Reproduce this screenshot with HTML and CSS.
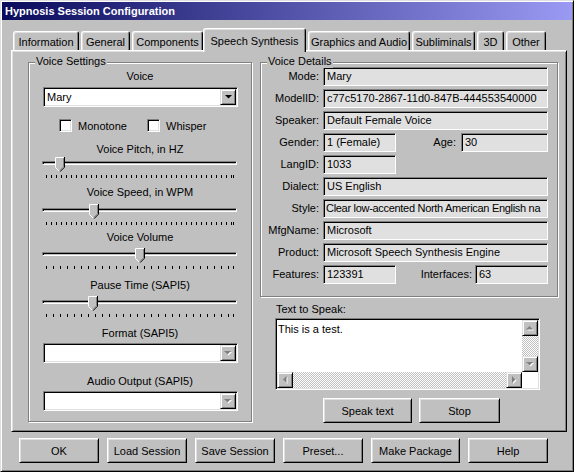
FILE: index.html
```html
<!DOCTYPE html>
<html lang="en">
<head>
  <meta charset="UTF-8" />
  <title>Hypnosis Session Configuration</title>
  <link rel="stylesheet" href="styles.css">
</head>
<body>
  <div class="window">
    <div class="titlebar">Hypnosis Session Configuration</div>

    <div class="tabs">
      <div class="tab">Information</div>
      <div class="tab">General</div>
      <div class="tab">Components</div>
      <div class="tab active">Speech Synthesis</div>
      <div class="tab">Graphics and Audio</div>
      <div class="tab">Subliminals</div>
      <div class="tab">3D</div>
      <div class="tab">Other</div>
    </div>

    <div class="panel">
      <div class="group voice-settings">
        <span class="group-title">Voice Settings</span>

        <div class="caption voice">Voice</div>
        <div class="combo voice">
          <span class="combo-text">Mary</span>
          <span class="drop"><svg width="7" height="4" viewBox="0 0 7 4"><path d="M0 0H7L3.5 3.5Z" fill="#000"/></svg></span>
        </div>

        <div class="checks">
          <label class="check"><span class="box"></span>Monotone</label>
          <label class="check"><span class="box"></span>Whisper</label>
        </div>

        <div class="caption pitch">Voice Pitch, in HZ</div>
        <div class="slider pitch">
          <div class="track"></div>
          <svg class="thumb" style="left: 13px" width="10" height="16" viewBox="0 0 10 16"><path d="M0 0H10V10L5 15L0 10Z" fill="#c0c0c0"/><path d="M0.5 10.5V0.5H9" stroke="#fff" fill="none"/><path d="M0.5 10.5L4.5 14.5" stroke="#fff"/><path d="M9.5 0V10.2L5 14.7" stroke="#000" fill="none"/><path d="M8.5 1V9.8L5 13.3" stroke="#808080" fill="none"/></svg>
          <div class="ticks fine"></div>
        </div>

        <div class="caption speed">Voice Speed, in WPM</div>
        <div class="slider speed">
          <div class="track"></div>
          <svg class="thumb" style="left: 47px" width="10" height="16" viewBox="0 0 10 16"><path d="M0 0H10V10L5 15L0 10Z" fill="#c0c0c0"/><path d="M0.5 10.5V0.5H9" stroke="#fff" fill="none"/><path d="M0.5 10.5L4.5 14.5" stroke="#fff"/><path d="M9.5 0V10.2L5 14.7" stroke="#000" fill="none"/><path d="M8.5 1V9.8L5 13.3" stroke="#808080" fill="none"/></svg>
          <div class="ticks fine"></div>
        </div>

        <div class="caption volume">Voice Volume</div>
        <div class="slider">
          <div class="track"></div>
          <svg class="thumb" style="left: 93px" width="10" height="16" viewBox="0 0 10 16"><path d="M0 0H10V10L5 15L0 10Z" fill="#c0c0c0"/><path d="M0.5 10.5V0.5H9" stroke="#fff" fill="none"/><path d="M0.5 10.5L4.5 14.5" stroke="#fff"/><path d="M9.5 0V10.2L5 14.7" stroke="#000" fill="none"/><path d="M8.5 1V9.8L5 13.3" stroke="#808080" fill="none"/></svg>
          <div class="ticks"></div>
        </div>

        <div class="caption">Pause Time (SAPI5)</div>
        <div class="slider">
          <div class="track"></div>
          <svg class="thumb" style="left: 46px" width="10" height="16" viewBox="0 0 10 16"><path d="M0 0H10V10L5 15L0 10Z" fill="#c0c0c0"/><path d="M0.5 10.5V0.5H9" stroke="#fff" fill="none"/><path d="M0.5 10.5L4.5 14.5" stroke="#fff"/><path d="M9.5 0V10.2L5 14.7" stroke="#000" fill="none"/><path d="M8.5 1V9.8L5 13.3" stroke="#808080" fill="none"/></svg>
          <div class="ticks"></div>
        </div>

        <div class="caption">Format (SAPI5)</div>
        <div class="combo">
          <span class="combo-text"></span>
          <span class="drop"><svg width="8" height="5" viewBox="0 0 8 5"><path d="M1 1H8L4.5 4.5Z" fill="#fff"/><path d="M0 0H7L3.5 3.5Z" fill="#808080"/></svg></span>
        </div>

        <div class="caption audio">Audio Output (SAPI5)</div>
        <div class="combo">
          <span class="combo-text"></span>
          <span class="drop"><svg width="8" height="5" viewBox="0 0 8 5"><path d="M1 1H8L4.5 4.5Z" fill="#fff"/><path d="M0 0H7L3.5 3.5Z" fill="#808080"/></svg></span>
        </div>
      </div>

      <div class="right">
        <div class="group voice-details">
          <span class="group-title">Voice Details</span>
          <div class="details">
            <span class="label">Mode:</span>
            <div class="field">Mary</div>

            <span class="label">ModelID:</span>
            <div class="field">c77c5170-2867-11d0-847B-444553540000</div>

            <span class="label">Speaker:</span>
            <div class="field">Default Female Voice</div>

            <span class="label">Gender:</span>
            <div class="split">
              <div class="field short">1 (Female)</div>
              <span class="label sub">Age:</span>
              <div class="field age">30</div>
            </div>

            <span class="label">LangID:</span>
            <div class="split">
              <div class="field short">1033</div>
            </div>

            <span class="label">Dialect:</span>
            <div class="field">US English</div>

            <span class="label">Style:</span>
            <div class="field squeeze">Clear low-accented North American English na</div>

            <span class="label">MfgName:</span>
            <div class="field">Microsoft</div>

            <span class="label">Product:</span>
            <div class="field">Microsoft Speech Synthesis Engine</div>

            <span class="label">Features:</span>
            <div class="split">
              <div class="field short">123391</div>
              <span class="label sub tight">Interfaces:</span>
              <div class="field short">63</div>
            </div>
          </div>
        </div>

        <div class="speak-label">Text to Speak:</div>
        <div class="textbox">
          <div class="text">This is a test.</div>
          <div class="vscroll">
            <span class="sbtn"><svg width="8" height="5" viewBox="0 0 8 5"><path d="M1 4.5H8L4.5 1Z" fill="#fff"/><path d="M0 3.5H7L3.5 0Z" fill="#808080"/></svg></span>
            <span class="strack"></span>
            <span class="sbtn"><svg width="8" height="5" viewBox="0 0 8 5"><path d="M1 1H8L4.5 4.5Z" fill="#fff"/><path d="M0 0H7L3.5 3.5Z" fill="#808080"/></svg></span>
          </div>
          <div class="hscroll">
            <span class="sbtn"><svg width="5" height="8" viewBox="0 0 5 8"><path d="M4.5 1V8L1 4.5Z" fill="#fff"/><path d="M3.5 0V7L0 3.5Z" fill="#808080"/></svg></span>
            <span class="strack"></span>
            <span class="sbtn"><svg width="5" height="8" viewBox="0 0 5 8"><path d="M1 1V8L4.5 4.5Z" fill="#fff"/><path d="M0 0V7L3.5 3.5Z" fill="#808080"/></svg></span>
          </div>
          <div class="corner"></div>
        </div>

        <div class="speak-buttons">
          <button class="btn speak-btn">Speak text</button>
          <button class="btn stop-btn">Stop</button>
        </div>
      </div>
    </div>

    <div class="buttons">
      <button class="btn">OK</button>
      <button class="btn">Load Session</button>
      <button class="btn">Save Session</button>
      <button class="btn">Preset...</button>
      <button class="btn wide">Make Package</button>
      <button class="btn">Help</button>
    </div>
  </div>
</body>
</html>
```

FILE: styles.css
```css
* {
  box-sizing: border-box;
}

body {
  margin: 0;
  font-family: "Liberation Sans", Arial, sans-serif;
  font-size: 11px;
  color: #000;
  background: #c0c0c0;
}

.window {
  width: 574px;
  height: 472px;
  padding: 1px;
  background: #c0c0c0;
  border: 1px solid;
  border-color: #dfdfdf #000 #000 #dfdfdf;
  box-shadow: inset 1px 1px #fff, inset -1px -1px #808080;
}

.titlebar {
  height: 18px;
  padding-left: 3px;
  line-height: 18px;
  font-weight: bold;
  color: #fff;
  background: linear-gradient(to right, #0a0a5c, #9a9af4);
}

/* tab strip */
.tabs {
  display: grid;
  grid-template-columns: 66px 49px 71px 101px 102px 63px 27px 40px;
  column-gap: 2px;
  align-items: end;
  height: 22px;
  margin: 8px 0 0 11px;
}

.tab {
  height: 19px;
  padding-top: 1px;
  line-height: 19px;
  text-align: center;
  white-space: nowrap;
  border: 1px solid;
  border-bottom: none;
  border-color: #fff #000 #000 #fff;
  border-radius: 3px 3px 0 0;
  box-shadow: inset 1px 1px #dfdfdf, inset -1px 0 #808080;
}

.tab.active {
  position: relative;
  z-index: 1;
  height: 24px;
  margin: 0 0 -2px -2px;
  padding-top: 2px;
  line-height: 21px;
  background: #c0c0c0;
}

.panel {
  display: grid;
  grid-template-columns: 224px 298px;
  column-gap: 8px;
  align-items: start;
  width: 556px;
  height: 382px;
  margin-left: 9px;
  padding: 11px 0 0 16px;
  border: 1px solid;
  border-color: #fff #000 #000 #fff;
  box-shadow: inset 1px 1px #dfdfdf, inset -1px -1px #808080;
}

/* etched group box */
.group {
  position: relative;
  border: 1px solid #808080;
  box-shadow: inset 1px 1px #fff, 1px 1px #fff;
}

.group-title {
  position: absolute;
  top: -8px;
  left: 6px;
  padding: 0 1px;
  line-height: 13px;
  background: #c0c0c0;
}

.voice-settings {
  height: 360px;
}

.caption {
  margin-top: 8px;
  line-height: 14px;
  text-align: center;
}

.caption.voice { margin-top: 6px; }
.caption.pitch { margin-top: 10px; }
.caption.speed { margin-top: 6px; }
.caption.volume { margin-top: 4px; }
.caption.audio { margin-top: 11px; }

.combo {
  display: flex;
  align-items: center;
  width: 195px;
  height: 20px;
  margin: 3px 0 0 14px;
  padding: 1px;
  background: #fff;
  border: 1px solid;
  border-color: #808080 #fff #fff #808080;
  box-shadow: inset 1px 1px #000, inset -1px -1px #dfdfdf;
}

.combo.voice {
  margin-top: 4px;
}

.combo-text {
  flex: 1;
  padding-left: 2px;
}

.drop,
.sbtn {
  display: flex;
  align-items: center;
  justify-content: center;
  width: 16px;
  height: 16px;
  background: #c0c0c0;
  border: 1px solid;
  border-color: #dfdfdf #000 #000 #dfdfdf;
  box-shadow: inset 1px 1px #fff, inset -1px -1px #808080;
}

.checks {
  display: grid;
  grid-template-columns: 88px auto;
  margin: 12px 0 0 30px;
}

.check {
  display: flex;
  align-items: center;
  gap: 6px;
  height: 13px;
}

.box {
  width: 13px;
  height: 13px;
  background: #fff;
  border: 1px solid;
  border-color: #808080 #fff #fff #808080;
  box-shadow: inset 1px 1px #000, inset -1px -1px #dfdfdf;
}

/* trackbars */
.slider {
  position: relative;
  width: 195px;
  height: 22px;
  margin: 4px 0 0 13px;
  padding-top: 4px;
}

.slider.pitch { margin-top: 1px; }
.slider.speed { margin-top: 5px; }

.track {
  height: 4px;
  border: 1px solid;
  border-color: #808080 #fff #fff #808080;
  box-shadow: inset 1px 1px #000;
}

.thumb {
  position: absolute;
  top: 0;
  display: block;
}

.ticks {
  width: 188px;
  height: 3px;
  margin: 10px 0 0 4px;
  border-right: 1px solid #000;
  background: repeating-linear-gradient(90deg, #000 0 1px, transparent 1px 7px);
}

.ticks.fine {
  background: repeating-linear-gradient(90deg, #000 0 1px, transparent 1px 5px);
}

/* voice details */
.right {
  display: flex;
  flex-direction: column;
}

.voice-details {
  height: 235px;
}

.details {
  display: grid;
  grid-template-columns: 58px 225px;
  grid-auto-rows: 19px;
  column-gap: 4px;
  row-gap: 3px;
  padding-top: 4px;
}

.label {
  line-height: 19px;
  text-align: right;
  white-space: nowrap;
}

.field {
  overflow: hidden;
  height: 19px;
  padding-left: 3px;
  line-height: 17px;
  white-space: nowrap;
  background: #e0e0e0;
  border: 1px solid;
  border-color: #808080 #fff #fff #808080;
  box-shadow: inset 1px 1px #000, inset -1px -1px #dfdfdf;
}

.field.squeeze {
  padding-left: 2px;
  letter-spacing: -0.3px;
}

.split {
  display: flex;
}

.field.short {
  flex: none;
  width: 73px;
}

.field.age {
  flex: none;
  width: 87px;
}

.sub {
  flex: 1;
  padding-right: 5px;
}

.sub.tight {
  padding-right: 3px;
}

/* text to speak */
.speak-label {
  margin: 5px 0 0 16px;
  line-height: 14px;
}

.textbox {
  display: grid;
  grid-template-columns: 1fr 16px;
  grid-template-rows: 1fr 16px;
  width: 265px;
  height: 72px;
  margin: 2px 0 0 15px;
  padding: 1px;
  background: #fff;
  border: 1px solid;
  border-color: #808080 #fff #fff #808080;
  box-shadow: inset 1px 1px #000, inset -1px -1px #dfdfdf;
}

.text {
  padding: 2px 0 0 1px;
  line-height: 14px;
}

.vscroll {
  display: flex;
  flex-direction: column;
}

.hscroll {
  display: flex;
}

.strack {
  flex: 1;
  background: repeating-conic-gradient(#fff 0 25%, #c0c0c0 0 50%) 0 0 / 2px 2px;
}

.corner {
  background: #fff;
}

.speak-buttons {
  display: flex;
  gap: 7px;
  margin: 8px 0 0 63px;
}

/* push buttons */
.btn {
  width: 80px;
  height: 25px;
  padding: 0;
  font: inherit;
  color: #000;
  background: #c0c0c0;
  border: 1px solid;
  border-color: #fff #000 #000 #fff;
  box-shadow: inset 1px 1px #dfdfdf, inset -1px -1px #808080;
}

.speak-btn { width: 89px; }
.stop-btn { width: 81px; }

.buttons {
  display: flex;
  gap: 8px;
  margin: 6px 0 0 17px;
}

.btn.wide {
  width: 89px;
}
```
